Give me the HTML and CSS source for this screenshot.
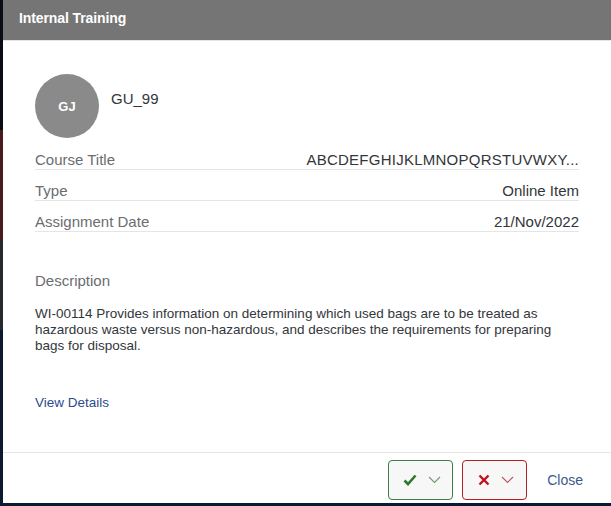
FILE: index.html
```html
<!DOCTYPE html>
<html lang="en">
<head>
    <meta charset="UTF-8">
    <meta name="viewport" content="width=device-width, initial-scale=1.0">
    <title>Internal Training</title>
    <link rel="stylesheet" href="styles.css">
</head>
<body>
    <div class="dialog">
        <header class="dialog-header">
            <h1>Internal Training</h1>
        </header>

        <div class="dialog-content">
            <div class="user">
                <div class="avatar">GJ</div>
                <div class="user-name">GU_99</div>
            </div>

            <div class="field-row">
                <span class="field-label">Course Title</span>
                <span class="field-value course-title">ABCDEFGHIJKLMNOPQRSTUVWXY...</span>
            </div>
            <div class="field-row">
                <span class="field-label">Type</span>
                <span class="field-value">Online Item</span>
            </div>
            <div class="field-row">
                <span class="field-label">Assignment Date</span>
                <span class="field-value">21/Nov/2022</span>
            </div>

            <div class="description">
                <h2>Description</h2>
                <p>WI-00114 Provides information on determining which used bags are to be treated as hazardous waste versus non-hazardous, and describes the requirements for preparing bags for disposal.</p>
            </div>

            <a href="#" class="view-details">View Details</a>
        </div>

        <footer class="dialog-footer">
            <button class="action-button accept">
                <svg width="14" height="12" viewBox="0 0 14 12"><path d="M1.5 6.5 L5 10 L12.5 1.5" fill="none" stroke="#2b7a2b" stroke-width="2.6"/></svg>
                <svg width="13" height="8" viewBox="0 0 13 8"><path d="M1 1 L6.5 6.5 L12 1" fill="none" stroke="#6f9a6f" stroke-width="1.1"/></svg>
            </button>
            <button class="action-button reject">
                <svg width="12" height="12" viewBox="0 0 12 12"><path d="M1.5 1.5 L10.5 10.5 M10.5 1.5 L1.5 10.5" fill="none" stroke="#c0111b" stroke-width="2.4"/></svg>
                <svg width="13" height="8" viewBox="0 0 13 8"><path d="M1 1 L6.5 6.5 L12 1" fill="none" stroke="#c5565c" stroke-width="1.1"/></svg>
            </button>
            <button class="close-button">Close</button>
        </footer>
    </div>
</body>
</html>
```

FILE: styles.css
```css
body {
    margin: 0;
    padding: 0;
    height: 506px;
    overflow: hidden;
    font-family: "Liberation Sans", Arial, sans-serif;
    background: linear-gradient(to bottom, #0a0d14 0, #0a0d14 130px, #4a1a1c 130px, #4a1a1c 240px, #26292e 240px, #26292e 330px, #0b1a30 330px);
}
.dialog {
    margin-left: 3px;
    width: 608px;
    height: 503px;
    background-color: white;
    display: flex;
    flex-direction: column;
}
.dialog-header {
    height: 41px;
    background-color: #757575;
    display: flex;
    align-items: center;
    padding-left: 16px;
    border-bottom: 1px solid #e4e4e4;
    box-sizing: border-box;
}
.dialog-header h1 {
    margin: 0;
    font-size: 14px;
    font-weight: bold;
    color: white;
    letter-spacing: -0.1px;
    padding-bottom: 4px;
}
.dialog-content {
    flex: 1;
    padding: 33px 32px 0 32px;
}
.user {
    display: flex;
    align-items: flex-start;
    margin-bottom: 1px;
}
.avatar {
    width: 64px;
    height: 64px;
    border-radius: 50%;
    background-color: #8a8a8a;
    color: white;
    font-weight: bold;
    font-size: 13px;
    display: flex;
    align-items: center;
    justify-content: center;
}
.user-name {
    margin-left: 12px;
    padding-top: 16px;
    font-size: 15px;
    line-height: 18px;
    color: #32363a;
}
.field-row {
    display: flex;
    justify-content: space-between;
    padding: 12px 0 0 0;
    line-height: 18px;
    font-size: 15px;
    border-bottom: 1px solid #e5e5e5;
}
.field-label {
    color: #6a6d70;
}
.field-value {
    color: #32363a;
    white-space: nowrap;
}
.course-title {
    letter-spacing: 0.25px;
}
.description {
    margin-top: 40px;
}
.description h2 {
    margin: 0;
    font-size: 15px;
    font-weight: normal;
    line-height: 18px;
    color: #6a6d70;
}
.description p {
    margin: 16px 0 0 0;
    font-size: 13.5px;
    line-height: 16px;
    color: #32363a;
    padding-right: 10px;
}
.view-details {
    display: inline-block;
    margin-top: 41px;
    font-size: 13.5px;
    line-height: 16px;
    color: #2b4b8c;
    text-decoration: none;
}
.dialog-footer {
    height: 51px;
    box-sizing: border-box;
    border-top: 1px solid #e5e5e5;
    display: flex;
    align-items: flex-start;
    justify-content: flex-end;
    padding: 7px 14px 0 0;
}
.action-button {
    width: 65px;
    height: 40px;
    border-radius: 4px;
    background-color: #f7f7f7;
    display: flex;
    align-items: center;
    justify-content: center;
    gap: 11px;
    padding: 0 0 0 2px;
    cursor: pointer;
}
.accept {
    border: 1px solid #3f7f46;
    margin-right: 9px;
}
.reject {
    border: 1px solid #b41e26;
    margin-right: 6px;
}
.close-button {
    height: 40px;
    padding: 0 14px;
    border: none;
    background: none;
    font-family: "Liberation Sans", Arial, sans-serif;
    font-size: 14px;
    color: #3a5a8c;
    cursor: pointer;
}
```
